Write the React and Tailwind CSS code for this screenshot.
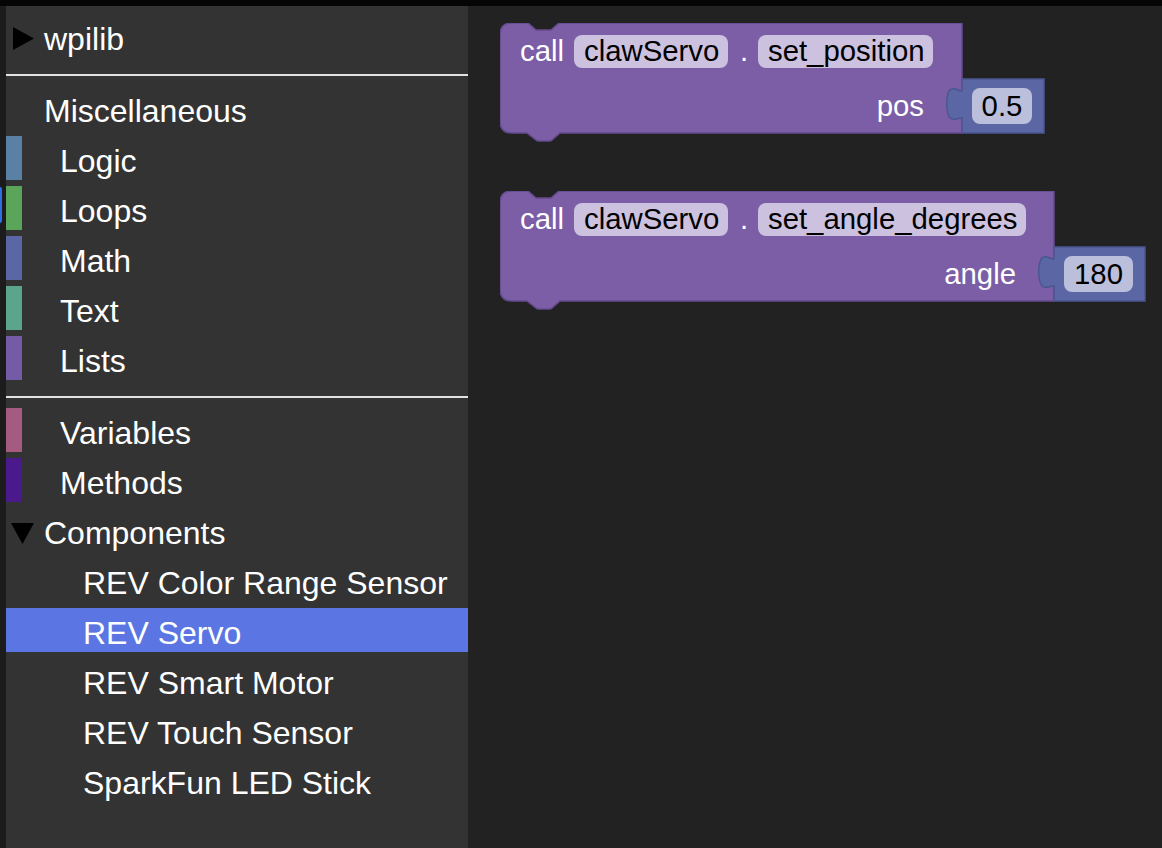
import React from "react";

const FONT = "'Liberation Sans', Arial, sans-serif";

function RightTri() {
  return (
    <svg width="23" height="25" viewBox="0 0 23 25" className="shrink-0">
      <polygon points="1,1 22,12.5 1,24" fill="#000" />
    </svg>
  );
}
function DownTri() {
  return (
    <svg width="25" height="23" viewBox="0 0 25 23" className="shrink-0">
      <polygon points="1,1 24,1 12.5,22" fill="#000" />
    </svg>
  );
}

function Block({ left, top, W, pill1W, pill2W, method, label, value, valueW, pillValW }) {
  const H = 110;
  const purple =
    `M0,12 Q0,0 12,0 H28 L36,7 H51 L59,0 H${W} V${H} H60 L52,117 Q51,118 49,118 H39 Q37,118 36,117 L27,${H} H12 Q0,${H} 0,${H - 12} Z`;
  const bx = W;
  const bw = valueW;
  const blue = `M${bx},56 H${bx + bw} V${H} H${bx} V95 C${bx - 5},95 ${bx - 5},97 ${bx - 10},96 C${bx - 17},95 ${bx - 17},66 ${bx - 10},66 C${bx - 5},65 ${bx - 5},68 ${bx},68 Z`;
  const p2x = 258;
  return (
    <svg
      className="absolute"
      style={{ left, top }}
      width={W + bw + 4}
      height={122}
      viewBox={`0 0 ${W + bw + 4} 122`}
      fontFamily={FONT}
      fontSize="29.33"
    >
      <path d={purple} fill="#7b5ea6" stroke="#654b8f" strokeWidth="1.5" />
      <text x="20" y="38" fill="#fff">call</text>
      <rect x="74" y="12" width={pill1W} height="33" rx="8" fill="#ccc1de" />
      <text x="84" y="38" fill="#000">clawServo</text>
      <text x="240" y="38" fill="#fff">.</text>
      <rect x={p2x} y="12" width={pill2W} height="33" rx="8" fill="#ccc1de" />
      <text x={p2x + 10} y="38" fill="#000">{method}</text>
      <text x={W - 38} y="93" fill="#fff" textAnchor="end">{label}</text>
      <path d={blue} fill="#5b67a5" stroke="#4b5690" strokeWidth="1.5" />
      <rect x={bx + 10} y="65" width={pillValW} height="36" rx="8" fill="#bbbfdc" />
      <text x={bx + 10 + pillValW / 2} y="93" fill="#000" textAnchor="middle">{value}</text>
    </svg>
  );
}

function CatRow({ color, label, selected }) {
  return (
    <div className={`flex h-[44px] mb-[6px] shrink-0 ${selected ? "bg-[#5b76e3]" : ""}`}>
      <div className="w-[16px] h-[44px] shrink-0" style={{ background: color }} />
      <div className="pl-[38px] pt-[7px] leading-[36px]">{label}</div>
    </div>
  );
}

function SubRow({ label, selected }) {
  return (
    <div className={`h-[44px] mb-[6px] shrink-0 pl-[77px] pt-[7px] leading-[36px] ${selected ? "bg-[#5b76e3]" : ""}`}>
      {label}
    </div>
  );
}

export default function App() {
  return (
    <div
      className="w-[1162px] h-[848px] bg-black flex flex-col overflow-hidden"
      style={{ fontFamily: FONT }}
    >
      <div className="h-[6px] bg-[#050505] shrink-0" />
      <div className="flex flex-1 min-h-0">
        <div className="w-[6px] bg-[#1c1c1c] shrink-0 relative">
          <div className="absolute left-0 top-[181px] w-[2px] h-[36px] rounded-r-[2px] bg-[#2f6fe6]" />
        </div>
        <aside className="w-[462px] shrink-0 bg-[#333333] pt-[8px] text-white text-[32px] flex flex-col">
          <div className="flex h-[44px] mb-[6px] shrink-0">
            <div className="pl-[6px] pt-[12px] w-[38px]">
              <RightTri />
            </div>
            <div className="pt-[7px] leading-[36px]">wpilib</div>
          </div>
          <div className="h-[2px] bg-[#e2e2e2] mt-[10px] mb-[10px] shrink-0" />
          <div className="h-[44px] mb-[6px] shrink-0 pl-[38px] pt-[7px] leading-[36px]">Miscellaneous</div>
          <CatRow color="#5b80a5" label="Logic" />
          <CatRow color="#5ba55b" label="Loops" />
          <CatRow color="#5b67a5" label="Math" />
          <CatRow color="#5ba58c" label="Text" />
          <CatRow color="#745ba5" label="Lists" />
          <div className="h-[2px] bg-[#e2e2e2] mt-[10px] mb-[10px] shrink-0" />
          <CatRow color="#a55b80" label="Variables" />
          <CatRow color="#4a1a8c" label="Methods" />
          <div className="flex h-[44px] mb-[6px] shrink-0">
            <div className="pl-[4px] pt-[14px] w-[38px]">
              <DownTri />
            </div>
            <div className="pt-[7px] leading-[36px]">Components</div>
          </div>
          <SubRow label="REV Color Range Sensor" />
          <SubRow label="REV Servo" selected />
          <SubRow label="REV Smart Motor" />
          <SubRow label="REV Touch Sensor" />
          <SubRow label="SparkFun LED Stick" />
        </aside>
        <main className="flex-1 bg-[#222222] relative">
          <Block
            left={32}
            top={17}
            W={462}
            pill1W={154}
            pill2W={175}
            method="set_position"
            label="pos"
            value="0.5"
            valueW={82}
            pillValW={60}
          />
          <Block
            left={32}
            top={185}
            W={554}
            pill1W={154}
            pill2W={268}
            method="set_angle_degrees"
            label="angle"
            value="180"
            valueW={91}
            pillValW={69}
          />
        </main>
      </div>
    </div>
  );
}
